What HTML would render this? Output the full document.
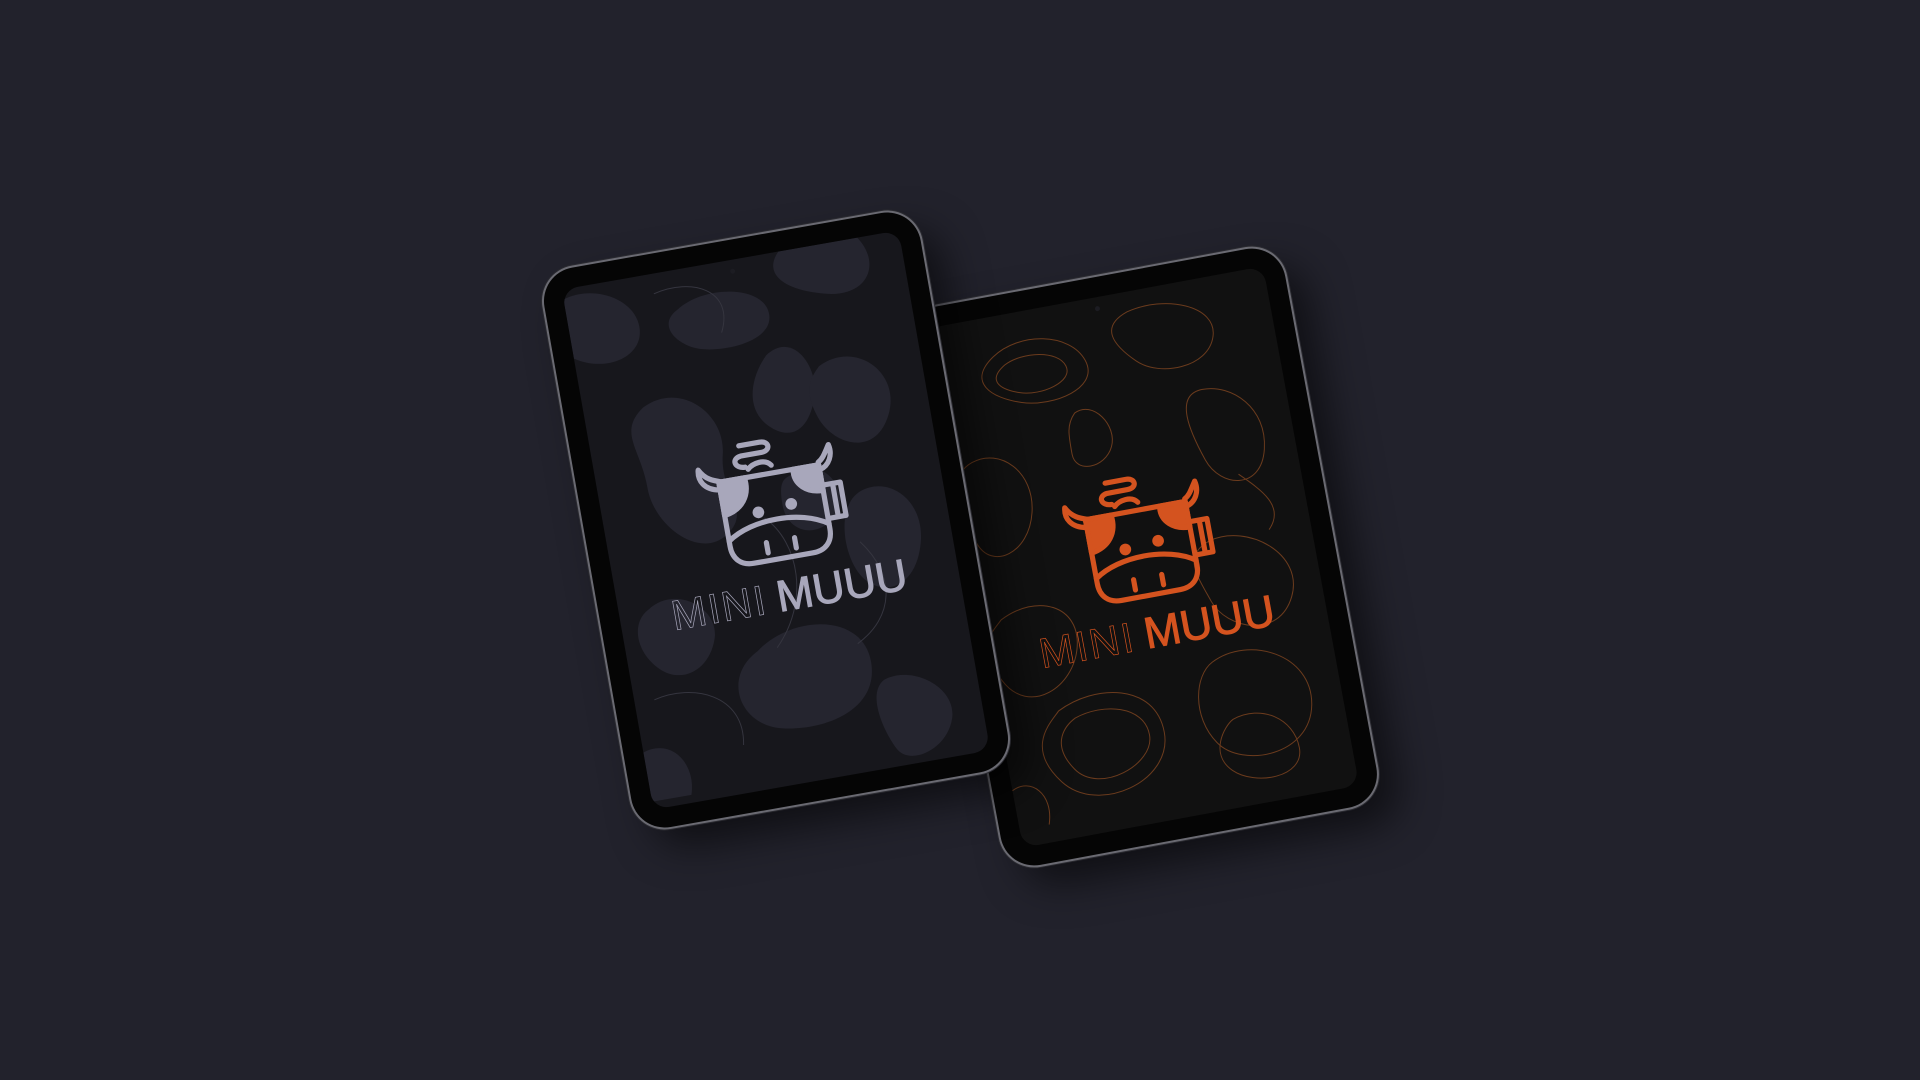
<!DOCTYPE html>
<html><head><meta charset="utf-8"><style>
html,body{margin:0;padding:0;width:1920px;height:1080px;overflow:hidden;background:#22222c;}
.tab{position:absolute;width:382px;height:568px;border-radius:34px;background:#050505;
 box-shadow:0 0 0 2px #6a6a72, 0 0 0 3px #2a2a30, 18px 22px 40px rgba(0,0,0,.55);}
.scr{position:absolute;left:20px;top:20px;right:20px;bottom:20px;border-radius:16px;overflow:hidden;}
.cam{position:absolute;left:50%;top:9px;width:5px;height:5px;margin-left:-2px;border-radius:50%;background:#1c1c22;}
.logo{position:absolute;left:0;top:0;width:100%;height:100%;}
</style></head><body>

<!-- right tablet (behind) -->
<div class="tab" style="left:952px;top:273px;transform:rotate(-10.5deg);">
 <div class="scr" style="background:#111111;">
  <svg width="342" height="528" viewBox="0 0 342 528" style="position:absolute;left:0;top:0" fill="none" stroke="#8a4a22" stroke-width="1" opacity=".75">
   <path d="M60 40c30-20 80-10 90 20s-40 40-70 30-50-30-20-50z"/>
   <path d="M70 50c20-10 55-5 60 12s-30 25-50 18-30-18-10-30z"/>
   <path d="M200 20c40-10 90 10 80 40s-60 30-80 10-30-40 0-50z"/>
   <path d="M260 110c30 0 60 30 50 70s-50 30-60 0-20-70 10-70z"/>
   <path d="M20 140c30-10 60 20 50 60s-50 50-60 20-20-70 10-80z"/>
   <path d="M130 110c20-10 40 20 30 40s-40 20-40 0 0-30 10-40z"/>
   <path d="M240 260c40-10 90 30 70 70s-70 20-80-10-20-50 10-60z"/>
   <path d="M20 300c40-20 80 0 70 40s-60 60-80 20 0-50 10-60z"/>
   <path d="M60 400c40-20 100-10 100 40s-80 70-110 30 0-60 10-70z"/>
   <path d="M75 410c30-10 70 0 70 30s-60 50-80 20 0-45 10-50z"/>
   <path d="M220 380c40-20 100 10 90 60s-80 50-100 20-10-70 10-80z"/>
   <path d="M230 440c30-10 60 10 60 40s-50 30-70 10 0-45 10-50z"/>
   <path d="M280 200c20 20 40 40 20 60"/>
   <path d="M0 470c20-10 40 10 30 40"/>
  </svg>
  <svg class="logo" viewBox="0 0 342 528">
   <g transform="translate(90,178) scale(1.3)" fill="none" stroke="#d4531f" stroke-width="4" stroke-linecap="round" stroke-linejoin="round">
    <path d="M66 24c-4-6-14-4-18 0M46 22c-8 0-10-8-2-9h16c8 0 8-8 0-8h-16"/>
    <path d="M24 30h78v50c0 10-6 16-16 16H40c-10 0-16-6-16-16z"/>
    <path d="M24 76c20-14 58-14 78 0"/>
    <path d="M52 82v8M74 82v8"/>
    <path d="M102 46h14v26h-14M110 46v26"/>
    <path d="M24 36C12 34 8 26 10 18c4 8 10 10 16 12M102 34c8-2 12-10 10-18-4 6-6 10-10 12"/>
    <path d="M24 30H44C46 44 38 54 24 56Z" fill="#d4531f"/>
    <path d="M102 30H82C80 42 90 50 102 50Z" fill="#d4531f"/>
    <circle cx="50" cy="58" r="2.5" fill="#d4531f"/><circle cx="76" cy="56" r="2.5" fill="#d4531f"/>
   </g>
   <text x="171" y="355" text-anchor="middle" font-family="Liberation Sans, sans-serif" font-size="44"><tspan fill="none" stroke="#d4531f" stroke-width="0.7" font-size="42" letter-spacing="2">MINI</tspan><tspan dx="10" fill="#d4531f" stroke="#d4531f" stroke-width="1">MUUU</tspan></text>
  </svg>
  <div class="cam"></div>
 </div>
</div>

<!-- left tablet (front) -->
<div class="tab" style="left:585px;top:236px;transform:rotate(-10deg);">
 <div class="scr" style="background:#17171c;">
  <svg width="342" height="528" viewBox="0 0 342 528" style="position:absolute;left:0;top:0">
   <g fill="#25252f">
    <path d="M0 10c30-10 70 10 70 40s-40 40-70 20z"/>
    <path d="M110 40c30-20 90-10 90 20s-60 30-80 20-30-30-10-40z"/>
    <path d="M220 0h80c20 30 0 60-40 50s-60-30-40-50z"/>
    <path d="M60 130c40-20 80 20 70 60s20 60-10 80-70-20-70-60 -20-60 10-80z"/>
    <path d="M190 100c30-20 50 20 40 50s-30 40-50 20-10-50 10-70z"/>
    <path d="M240 120c40-20 80 20 60 60s-60 20-70-10 0-40 10-50z"/>
    <path d="M260 250c30-10 60 20 50 60s-40 50-60 30-20-80 10-90z"/>
    <path d="M30 330c30-20 70 10 60 40s-40 40-60 20-20-50 0-60z"/>
    <path d="M130 390c40-30 110-20 110 30s-60 60-100 50-50-60-10-80z"/>
    <path d="M250 440c30-10 70 20 60 50s-50 40-60 20-20-60 0-70z"/>
    <path d="M0 470c30-10 50 20 40 50H0z"/>
    <path d="M200 220c30-10 50 30 30 50s-50 10-50-20 10-25 20-30z"/>
   </g>
   <g fill="none" stroke="#35353f" stroke-width="1">
    <path d="M90 20c40-10 80 10 60 50"/><path d="M20 420c40-10 90 10 80 60"/><path d="M250 300c30 40 20 80-20 100"/><path d="M160 260c30 30 30 90-10 130"/>
   </g>
  </svg>
  <svg class="logo" viewBox="0 0 342 528">
   <g transform="translate(90,178) scale(1.3)" fill="none" stroke="#a8a7bb" stroke-width="4" stroke-linecap="round" stroke-linejoin="round">
    <path d="M66 24c-4-6-14-4-18 0M46 22c-8 0-10-8-2-9h16c8 0 8-8 0-8h-16"/>
    <path d="M24 30h78v50c0 10-6 16-16 16H40c-10 0-16-6-16-16z"/>
    <path d="M24 76c20-14 58-14 78 0"/>
    <path d="M52 82v8M74 82v8"/>
    <path d="M102 46h14v26h-14M110 46v26"/>
    <path d="M24 36C12 34 8 26 10 18c4 8 10 10 16 12M102 34c8-2 12-10 10-18-4 6-6 10-10 12"/>
    <path d="M24 30H44C46 44 38 54 24 56Z" fill="#a8a7bb"/>
    <path d="M102 30H82C80 42 90 50 102 50Z" fill="#a8a7bb"/>
    <circle cx="50" cy="58" r="2.5" fill="#a8a7bb"/><circle cx="76" cy="56" r="2.5" fill="#a8a7bb"/>
   </g>
   <text x="171" y="355" text-anchor="middle" font-family="Liberation Sans, sans-serif" font-size="44"><tspan fill="none" stroke="#a8a7bb" stroke-width="0.7" font-size="42" letter-spacing="2">MINI</tspan><tspan dx="10" fill="#a8a7bb" stroke="#a8a7bb" stroke-width="1">MUUU</tspan></text>
  </svg>
  <div class="cam"></div>
 </div>
</div>

</body></html>
